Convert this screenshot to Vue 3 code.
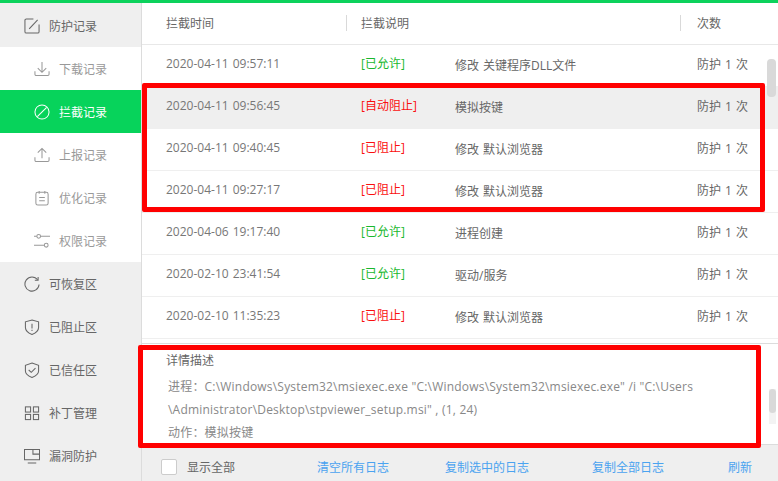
<script setup>
const subItems = [
  { label: '下载记录', icon: 'download' },
  { label: '拦截记录', icon: 'block', active: true },
  { label: '上报记录', icon: 'upload' },
  { label: '优化记录', icon: 'note' },
  { label: '权限记录', icon: 'sliders' },
]
const lowerItems = [
  { label: '可恢复区', icon: 'restore' },
  { label: '已阻止区', icon: 'shieldx' },
  { label: '已信任区', icon: 'shieldok' },
  { label: '补丁管理', icon: 'grid' },
  { label: '漏洞防护', icon: 'monitor' },
]
const rows = [
  { time: '2020-04-11 09:57:11', state: '[已允许]', ok: true, desc: '修改 关键程序DLL文件' },
  { time: '2020-04-11 09:56:45', state: '[自动阻止]', desc: '模拟按键', hover: true },
  { time: '2020-04-11 09:40:45', state: '[已阻止]', desc: '修改 默认浏览器' },
  { time: '2020-04-11 09:27:17', state: '[已阻止]', desc: '修改 默认浏览器' },
  { time: '2020-04-06 19:17:40', state: '[已允许]', ok: true, desc: '进程创建' },
  { time: '2020-02-10 23:41:54', state: '[已允许]', ok: true, desc: '驱动/服务' },
  { time: '2020-02-10 11:35:23', state: '[已阻止]', desc: '修改 默认浏览器' },
]
</script>

<template>
  <div class="app">
    <aside class="side">
      <div class="item head">
        <svg class="ic" viewBox="0 0 17 17"><path d="M10 1H2.500A1.500 1.500 0 0 0 1 2.500v12A1.500 1.500 0 0 0 2.500 16h12a1.500 1.500 0 0 0 1.500-1.500V7"/><path d="M5.500 11.500 14.500 2"/></svg>
        <span>防护记录</span>
      </div>
      <div v-for="s in subItems" :key="s.label" class="item sub" :class="{ active: s.active }">
        <svg class="ic" viewBox="0 0 17 17">
          <template v-if="s.icon === 'download'"><path d="M8.500 1v11M4 7.500l4.500 4.500 4.500-4.500"/><path d="M1 11v3.200A1.300 1.300 0 0 0 2.300 15.500h12.400a1.300 1.300 0 0 0 1.300-1.300V11"/></template>
          <template v-else-if="s.icon === 'block'"><circle cx="8.500" cy="8.500" r="7.500"/><path d="M3.500 13.500 13.500 3.500"/></template>
          <template v-else-if="s.icon === 'upload'"><path d="M8.500 12V1.500M4 6l4.500-4.500L13 6"/><path d="M1 11v3.200A1.300 1.300 0 0 0 2.300 15.500h12.400a1.300 1.300 0 0 0 1.300-1.300V11"/></template>
          <template v-else-if="s.icon === 'note'"><rect x="2" y="2.500" width="13" height="13.500" rx="2"/><path d="M5.500 1v3M11.500 1v3M5.500 8h6M5.500 11.500h6"/></template>
          <template v-else><path d="M0 3.500h3M7 3.500h10M0 13h11"/><circle cx="5" cy="3.500" r="2"/><circle cx="13" cy="13" r="2"/></template>
        </svg>
        <span>{{ s.label }}</span>
      </div>
      <div v-for="s in lowerItems" :key="s.label" class="item head">
        <svg class="ic" viewBox="0 0 17 17">
          <template v-if="s.icon === 'restore'"><path d="M14.500 4A7.500 7.500 0 1 0 16 9"/><path d="M15 1v3.500h-3.500"/></template>
          <template v-else-if="s.icon === 'shieldx'"><path d="M8.500 1 15.500 3v6c0 3.500-3.500 6-7 7.500C5 15 1.500 12.500 1.500 9V3z"/><path d="M8.500 5v5M8.500 11.500v1.200"/></template>
          <template v-else-if="s.icon === 'shieldok'"><path d="M8.500 1 15.500 3.500v6c0 3-3.500 5.500-7 7-3.500-1.500-7-4-7-7v-6z"/><path d="M5 8.500l2.700 2.500 4.500-4.500"/></template>
          <template v-else-if="s.icon === 'grid'"><rect x="1.500" y="2" width="5.500" height="5.500"/><rect x="10" y="2" width="5.500" height="5.500"/><rect x="1.500" y="10" width="5.500" height="5.500"/><rect x="10" y="10" width="5.500" height="5.500"/></template>
          <template v-else><path d="M.5 1.500h16v11H.5zM4 16h9"/><path d="M9.500 1.500v5h7"/></template>
        </svg>
        <span>{{ s.label }}</span>
      </div>
    </aside>

    <main class="main">
      <div class="row thead">
        <span>拦截时间</span>
        <span class="th-reason">拦截说明</span>
        <span></span>
        <span class="th-count">次数</span>
      </div>
      <div class="list">
        <div v-for="r in rows" :key="r.time" class="row body" :class="{ hover: r.hover }">
          <span class="time">{{ r.time }}</span>
          <span class="state" :class="r.ok ? 'ok' : 'bad'">{{ r.state }}</span>
          <span class="desc">{{ r.desc }}</span>
          <span class="count">防护 1 次</span>
        </div>
        <div class="thumb1"></div>
      </div>
      <section class="detail">
        <h4>详情描述</h4>
        <p>进程：C:\Windows\System32\msiexec.exe "C:\Windows\System32\msiexec.exe" /i "C:\Users<br>\Administrator\Desktop\stpviewer_setup.msi" , (1, 24)</p>
        <p>动作：模拟按键</p>
        <div class="track2"><div class="thumb2"></div></div>
      </section>
      <footer class="foot">
        <i class="check"></i>
        <span class="showall">显示全部</span>
        <a class="a1">清空所有日志</a>
        <a class="a2">复制选中的日志</a>
        <a class="a3">复制全部日志</a>
        <a class="a4">刷新</a>
      </footer>
    </main>

    <div class="mark m1"></div>
    <div class="mark m2"></div>
  </div>
</template>

<style>
html, body { margin: 0; padding: 0; background: #fff; }
</style>

<style scoped>
.app {
  position: relative;
  width: 778px;
  height: 481px;
  overflow: hidden;
  display: flex;
  box-sizing: border-box;
  border-top: 3px solid #0cd25c;
  font-family: "Open Sans", "Noto Sans CJK SC", sans-serif;
  font-size: 12px;
  color: #666;
  background: #fff;
}
.side {
  width: 141px;
  flex: none;
  background: #efefef;
  border-right: 1px solid #dcdcdc;
}
.item {
  height: 43px;
  display: flex;
  align-items: center;
  padding-left: 24px;
  gap: 9px;
  box-sizing: border-box;
}
.item:first-child { height: 44px; padding-top: 1px; }
.sub { background: #fff; padding-left: 34px; color: #999; }
.sub.active { background: #07d35b; color: #fff; }
.ic {
  width: 16px;
  height: 16px;
  flex: none;
  fill: none;
  stroke: currentColor;
  stroke-width: 1.100;
}
.main {
  flex: 1;
  min-width: 0;
  display: flex;
  flex-direction: column;
}
.row {
  display: grid;
  grid-template-columns: 195px 94px 242px 1fr;
  padding-left: 24px;
  height: 42px;
  align-items: center;
  box-sizing: border-box;
  border-bottom: 1px solid #efefef;
}
.row.body { padding-bottom: 4px; word-spacing: 1px; }
.row.hover { background: #efefef; }
.thead { border-bottom: 1px solid #e8e8e8; padding-bottom: 1px; }
.th-reason, .th-count { position: relative; }
.th-reason::before, .th-count::before {
  content: "";
  position: absolute;
  left: -15px;
  top: 1px;
  height: 16px;
  width: 1px;
  background: #d9d9d9;
}
.th-count::before { left: -17px; }
.list {
  position: relative;
  height: 299px;
  border-bottom: 1px solid #dcdcdc;
  box-sizing: border-box;
}
.time { color: #777; }
.state { padding-bottom: 2px; }
.desc { padding-top: 2px; }
.state.ok { color: #1ab82e; }
.state.bad { color: #fa0f0f; }
.thumb1 {
  position: absolute;
  left: 625px;
  top: 14px;
  width: 9px;
  height: 38px;
  border-radius: 4px;
  background: #d9d9d9;
}
.detail {
  position: relative;
  height: 100px;
  padding: 8px 0 0 24px;
  box-sizing: border-box;
}
.detail h4 {
  margin: 0 0 6px;
  font-weight: 400;
  line-height: 17px;
  color: #666;
}
.detail p {
  margin: 0 0 0 2px;
  line-height: 23px;
  color: #888;
  letter-spacing: 0.2px;
  white-space: nowrap;
}
.track2 {
  position: absolute;
  right: 2px;
  top: 45px;
  width: 7px;
  height: 35px;
  background: #f3f3f3;
}
.thumb2 {
  width: 7px;
  height: 24px;
  border-radius: 4px;
  background: #d9d9d9;
}
.foot {
  flex: 1;
  background: #efefef;
  border-top: 1px solid #dcdcdc;
  display: flex;
  align-items: center;
  padding: 8px 0 0 19px;
  white-space: nowrap;
}
.check {
  width: 14px;
  height: 14px;
  flex: none;
  background: #fff;
  border: 1px solid #ccc;
  border-radius: 2px;
  margin-right: 10px;
}
.showall { width: 130px; color: #666; }
.foot a { color: #4aa3f0; }
.a1 { width: 128px; }
.a2 { width: 147px; }
.a3 { width: 136px; }
.mark {
  position: absolute;
  box-sizing: border-box;
  border: 5px solid #ff0000;
  border-radius: 2px;
  pointer-events: none;
}
.m1 { left: 142px; top: 80px; width: 623px; height: 129px; }
.m2 { left: 138px; top: 342px; width: 623px; height: 103px; }
</style>
